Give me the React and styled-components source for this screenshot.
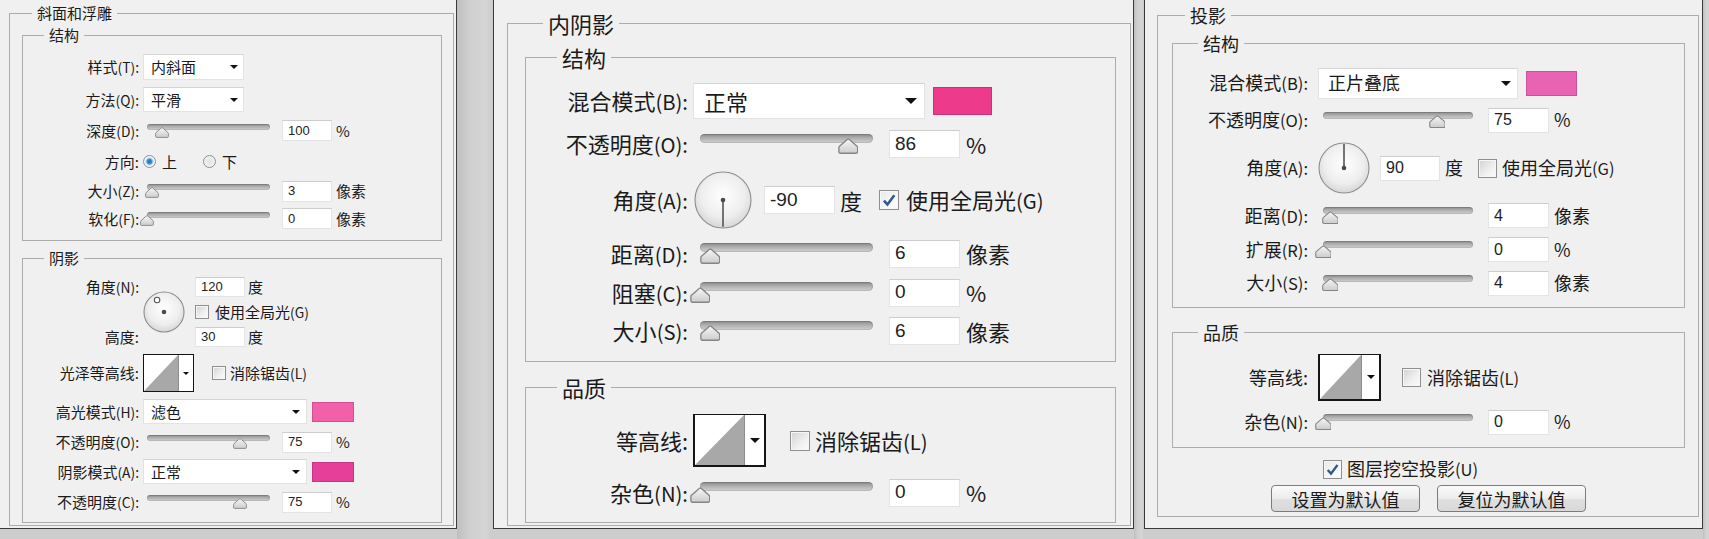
import React from "react";
import styled, { createGlobalStyle } from "styled-components";

const GlobalStyle = createGlobalStyle`
  html, body {
    margin: 0;
    padding: 0;
  }
  body {
    background: #cfcfcf;
    font-family: "Noto Sans CJK SC", "Noto Sans", sans-serif;
    color: #1a1a1a;
  }
`;

// sizes for each of the three cropped dialogs (they were captured at different zooms)
const LEFT = { s: 1, labelW: 116, gap: 4, sliderW: 127, pad: 4, fieldMl: 12, fieldW: 50, fieldH: 21, numFs: 13, unitMl: 4, box: 14 };
const MID = { s: 22 / 15, labelW: 162, gap: 5, sliderW: 180, pad: 7, fieldMl: 16, fieldW: 71, fieldH: 28, numFs: 19, unitMl: 6, box: 20 };
const RIGHT = { s: 1.2, labelW: 135, gap: 10, sliderW: 155, pad: 5, fieldMl: 15, fieldW: 61, fieldH: 25, numFs: 16, unitMl: 5, box: 19 };

function Slider({ c, frac }) {
  const s = c.s;
  const len = c.sliderW - c.pad;
  const tw = 14 * s;
  const left = c.pad + frac * len - tw / 2;
  return (
    <SliderBox $w={c.sliderW} $h={16 * s}>
      <Track $ml={c.pad} $mt={1 * s} $h={6 * s} />
      <Thumb width={tw} height={11 * s} viewBox="0 0 14 11" $top={4 * s} style={{ left }}>
        <defs>
          <linearGradient id="thumbFill" x1="0" y1="0" x2="0" y2="1">
            <stop offset="0" stopColor="#f6f6f6" />
            <stop offset="1" stopColor="#cccccc" />
          </linearGradient>
        </defs>
        <path
          d="M7 0.8 C7.4 0.8 7.8 1 8.1 1.3 L13 5.6 C13.3 5.9 13.4 6.2 13.4 6.6 V9.4 C13.4 10 13 10.4 12.4 10.4 H1.6 C1 10.4 0.6 10 0.6 9.4 V6.6 C0.6 6.2 0.7 5.9 1 5.6 L5.9 1.3 C6.2 1 6.6 0.8 7 0.8 Z"
          fill="url(#thumbFill)"
          stroke="#858585"
          strokeWidth="0.9"
        />
      </Thumb>
    </SliderBox>
  );
}

function SliderRow({ c, h, label, k, frac, value, unit }) {
  return (
    <Row $h={h}>
      <Label $w={c.labelW} $gap={c.gap}>
        {label}
        <Key>({k}):</Key>
      </Label>
      <Slider c={c} frac={frac} />
      <Field $w={c.fieldW} $h={c.fieldH} $ml={c.fieldMl} $fs={c.numFs}>
        {value}
      </Field>
      <Unit $ml={c.unitMl}>{unit}</Unit>
    </Row>
  );
}

function Dial({ size, angle, knob }) {
  const a = (angle * Math.PI) / 180;
  const px = 100 / size;
  return (
    <DialSvg width={size} height={size} viewBox="0 0 100 100">
      <defs>
        <radialGradient id="dialFace" cx="50%" cy="42%" r="60%">
          <stop offset="0" stopColor="#ffffff" />
          <stop offset="0.65" stopColor="#eeeeee" />
          <stop offset="1" stopColor="#d4d4d4" />
        </radialGradient>
      </defs>
      <circle cx="50" cy="50" r={50 - px} fill="url(#dialFace)" stroke="#8e8e8e" strokeWidth={px * 1.1} />
      {knob ? (
        <circle
          cx={50 + 33 * Math.cos(a)}
          cy={50 - 33 * Math.sin(a)}
          r="6.5"
          fill="#fff"
          stroke="#555"
          strokeWidth={px * 1.1}
        />
      ) : (
        <line
          x1="50"
          y1="50"
          x2={50 + 46 * Math.cos(a)}
          y2={50 - 46 * Math.sin(a)}
          stroke="#4a4a4a"
          strokeWidth={px * 1.5}
        />
      )}
      <circle cx="50" cy="50" r={px * 2.3} fill="#4a4a4a" />
    </DialSvg>
  );
}

function Check({ size, ml, on }) {
  return (
    <CheckBox $s={size} $ml={ml} $on={on}>
      {on && (
        <svg width={size - 4} height={size - 4} viewBox="0 0 12 12">
          <path d="M2.2 6.4 L4.8 9.3 L10 2.4" fill="none" stroke="#33578f" strokeWidth="1.9" />
        </svg>
      )}
    </CheckBox>
  );
}

function ContourPicker({ w, h, strip, caret, bw }) {
  return (
    <Contour $w={w} $h={h} $bw={bw}>
      <ContourPlot viewBox="0 0 100 100" preserveAspectRatio="none">
        <polygon points="0,100 100,0 100,100" fill="#a8a8a8" />
      </ContourPlot>
      <ContourDrop $w={strip}>
        <Caret $s={caret} />
      </ContourDrop>
    </Contour>
  );
}

function BevelPanel() {
  const c = LEFT;
  return (
    <Panel $w={457} $fs={15} $noLeft>
      <Group $m="2px 2px 0 9px" $p="0 11px 2px 12px">
        <Legend $ml={10} $lh={22}>斜面和浮雕</Legend>

        <Group $p="4px 0 8px">
          <Legend $ml={21} $lh={22}>结构</Legend>
          <Row $h={34}>
            <Label $w={c.labelW} $gap={c.gap}>样式<Key>(T):</Key></Label>
            <Select $w={101} $h={26} $pl={7} $pr={5}>内斜面<Caret $s={4} /></Select>
          </Row>
          <Row $h={31}>
            <Label $w={c.labelW} $gap={c.gap}>方法<Key>(Q):</Key></Label>
            <Select $w={101} $h={25} $pl={7} $pr={5}>平滑<Caret $s={4} /></Select>
          </Row>
          <SliderRow c={c} h={31} label="深度" k="D" frac={0.12} value="100" unit="%" />
          <Row $h={31}>
            <Label $w={c.labelW} $gap={c.gap}>方向:</Label>
            <Radio $on />
            <Unit $ml={6}>上</Unit>
            <Radio $ml={26} />
            <Unit $ml={6}>下</Unit>
          </Row>
          <SliderRow c={c} h={28} label="大小" k="Z" frac={0.04} value="3" unit="像素" />
          <SliderRow c={c} h={27} label="软化" k="F" frac={0} value="0" unit="像素" />
        </Group>

        <Group $m="6px 0 0" $p="7px 0 2px">
          <Legend $ml={21} $lh={22}>阴影</Legend>
          <AngleGrid $labelW={c.labelW + c.gap} $dialW={52} $rows="22px 28px 22px">
            <GridLabel $gap={c.gap} $row={1}>角度<Key>(N):</Key></GridLabel>
            <DialCell>
              <Dial size={42} angle={120} knob />
            </DialCell>
            <Cell $row={1}>
              <Field $w={50} $h={20} $fs={13}>120</Field>
              <Unit $ml={3}>度</Unit>
            </Cell>
            <Cell $row={2}>
              <Check size={14} />
              <Unit $ml={6}>使用全局光<Key>(G)</Key></Unit>
            </Cell>
            <GridLabel $gap={c.gap} $row={3}>高度:</GridLabel>
            <Cell $row={3}>
              <Field $w={50} $h={20} $fs={13}>30</Field>
              <Unit $ml={3}>度</Unit>
            </Cell>
          </AngleGrid>
          <Row $h={50}>
            <Label $w={c.labelW} $gap={c.gap}>光泽等高线:</Label>
            <ContourPicker w={51} h={38} strip={14} caret={3} bw={1} />
            <Check size={14} ml={18} />
            <Unit $ml={4}>消除锯齿<Key>(L)</Key></Unit>
          </Row>
          <Row $h={27}>
            <Label $w={c.labelW} $gap={c.gap}>高光模式<Key>(H):</Key></Label>
            <Select $w={164} $h={25} $pl={7} $pr={6}>滤色<Caret $s={4} /></Select>
            <Swatch $w={42} $h={20} $ml={5} $c="#f160a8" />
          </Row>
          <SliderRow c={c} h={34} label="不透明度" k="O" frac={0.756} value="75" unit="%" />
          <Row $h={25}>
            <Label $w={c.labelW} $gap={c.gap}>阴影模式<Key>(A):</Key></Label>
            <Select $w={164} $h={25} $pl={7} $pr={6}>正常<Caret $s={4} /></Select>
            <Swatch $w={42} $h={20} $ml={5} $c="#e63f9a" />
          </Row>
          <SliderRow c={c} h={36} label="不透明度" k="C" frac={0.756} value="75" unit="%" />
        </Group>
      </Group>
    </Panel>
  );
}

function InnerShadowPanel() {
  const c = MID;
  return (
    <Panel $w={641} $fs={22}>
      <Group $m="8px 2px 0 13px" $p="0 14px 2px 17px">
        <Legend $ml={18} $lh={30}>内阴影</Legend>

        <Group $m="4px 0 0" $p="8px 0 11px">
          <Legend $ml={31} $lh={30}>结构</Legend>
          <Row $h={42}>
            <Label $w={c.labelW} $gap={c.gap}>混合模式<Key>(B):</Key></Label>
            <Select $w={232} $h={36} $pl={10} $pr={7}>正常<Caret $s={6} /></Select>
            <Swatch $w={59} $h={28} $ml={8} $c="#ee3a8b" />
          </Row>
          <SliderRow c={c} h={44} label="不透明度" k="O" frac={0.855} value="86" unit="%" />
          <Row $h={68}>
            <Label $w={c.labelW} $gap={c.gap}>角度<Key>(A):</Key></Label>
            <DialWrap $ml={1}>
              <Dial size={58} angle={-90} />
            </DialWrap>
            <Field $w={71} $h={28} $ml={12} $fs={19}>-90</Field>
            <Unit $ml={5}>度</Unit>
            <Check size={c.box} ml={17} on />
            <Unit $ml={7}>使用全局光<Key>(G)</Key></Unit>
          </Row>
          <SliderRow c={c} h={39} label="距离" k="D" frac={0.058} value="6" unit="像素" />
          <SliderRow c={c} h={39} label="阻塞" k="C" frac={0} value="0" unit="%" />
          <SliderRow c={c} h={38} label="大小" k="S" frac={0.058} value="6" unit="像素" />
        </Group>

        <Group $m="10px 0 0" $p="8px 0 8px">
          <Legend $ml={31} $lh={30}>品质</Legend>
          <Row $h={61}>
            <Label $w={c.labelW} $gap={c.gap}>等高线:</Label>
            <ContourPicker w={73} h={53} strip={19} caret={5} bw={2} />
            <Check size={c.box} ml={24} />
            <Unit $ml={5}>消除锯齿<Key>(L)</Key></Unit>
          </Row>
          <SliderRow c={c} h={43} label="杂色" k="N" frac={0} value="0" unit="%" />
        </Group>
      </Group>
    </Panel>
  );
}

function DropShadowPanel() {
  const c = RIGHT;
  return (
    <Panel $w={559} $fs={18}>
      <Group $m="2px 3px 0 12px" $p="0 13px 4px 14px">
        <Legend $ml={13} $lh={26}>投影</Legend>

        <Group $m="2px 0 0" $p="8px 0 7px">
          <Legend $ml={25} $lh={26}>结构</Legend>
          <Row $h={38}>
            <Label $w={c.labelW} $gap={c.gap}>混合模式<Key>(B):</Key></Label>
            <Select $w={200} $h={31} $pl={9} $pr={6}>正片叠底<Caret $s={5} /></Select>
            <Swatch $w={51} $h={25} $ml={8} $c="#e864b3" />
          </Row>
          <SliderRow c={c} h={36} label="不透明度" k="O" frac={0.76} value="75" unit="%" />
          <Row $h={60}>
            <Label $w={c.labelW} $gap={c.gap}>角度<Key>(A):</Key></Label>
            <Dial size={52} angle={90} />
            <Field $w={60} $h={25} $ml={10} $fs={16}>90</Field>
            <Unit $ml={5}>度</Unit>
            <Check size={c.box} ml={15} />
            <Unit $ml={5}>使用全局光<Key>(G)</Key></Unit>
          </Row>
          <SliderRow c={c} h={35} label="距离" k="D" frac={0.047} value="4" unit="像素" />
          <SliderRow c={c} h={33} label="扩展" k="R" frac={0} value="0" unit="%" />
          <SliderRow c={c} h={34} label="大小" k="S" frac={0.047} value="4" unit="像素" />
        </Group>

        <Group $m="11px 0 0" $p="5px 0 8px">
          <Legend $ml={25} $lh={26}>品质</Legend>
          <Row $h={55}>
            <Label $w={c.labelW} $gap={c.gap}>等高线:</Label>
            <ContourPicker w={63} h={47} strip={17} caret={4} bw={2} />
            <Check size={c.box} ml={21} />
            <Unit $ml={6}>消除锯齿<Key>(L)</Key></Unit>
          </Row>
          <SliderRow c={c} h={34} label="杂色" k="N" frac={0} value="0" unit="%" />
        </Group>

        <KnockoutRow>
          <Check size={c.box} on />
          <Unit $ml={5}>图层挖空投影<Key>(U)</Key></Unit>
        </KnockoutRow>
        <ButtonRow>
          <Button>设置为默认值</Button>
          <Button>复位为默认值</Button>
        </ButtonRow>
      </Group>
    </Panel>
  );
}

function App() {
  return (
    <>
      <GlobalStyle />
      <Page>
        <BevelPanel />
        <Gutter $w={36} />
        <InnerShadowPanel />
        <Gutter $w={10} />
        <DropShadowPanel />
        <Gutter $w={6} />
      </Page>
    </>
  );
}

const Page = styled.div`
  display: flex;
  align-items: flex-start;
  width: 1709px;
  height: 539px;
  overflow: hidden;
  background: #cdcdcd;
`;

const Gutter = styled.div`
  flex-shrink: 0;
  width: ${(p) => p.$w}px;
  height: 539px;
  background: linear-gradient(90deg, #bfbfbf, #cfcfcf 35%, #d5d5d5 80%, #cbcbcb);
`;

const Panel = styled.section`
  box-sizing: border-box;
  flex-shrink: 0;
  width: ${(p) => p.$w}px;
  height: 529px;
  overflow: hidden;
  background: #f0f0f0;
  border-bottom: 1px solid #3a3a3a;
  border-left: ${(p) => (p.$noLeft ? "none" : "1px solid #3a3a3a")};
  border-right: 1px solid #3a3a3a;
  font-size: ${(p) => p.$fs}px;
  line-height: 1.2;
`;

const Group = styled.fieldset`
  margin: ${(p) => p.$m || "0"};
  padding: ${(p) => p.$p || "0"};
  border: 1px solid #acacac;
  min-inline-size: 0;
`;

const Legend = styled.legend`
  margin-left: ${(p) => p.$ml}px;
  padding: 0 5px;
  line-height: ${(p) => p.$lh}px;
  color: #1a1a1a;
`;

const Row = styled.div`
  display: flex;
  align-items: center;
  height: ${(p) => p.$h}px;
  white-space: nowrap;
`;

const Label = styled.span`
  flex-shrink: 0;
  width: ${(p) => p.$w}px;
  margin-right: ${(p) => p.$gap}px;
  text-align: right;
  white-space: nowrap;
`;

const Key = styled.span`
  font-size: 0.92em;
`;

const Unit = styled.span`
  flex-shrink: 0;
  margin-left: ${(p) => p.$ml || 0}px;
  white-space: nowrap;
`;

const Select = styled.div`
  box-sizing: border-box;
  flex-shrink: 0;
  display: flex;
  align-items: center;
  justify-content: space-between;
  width: ${(p) => p.$w}px;
  height: ${(p) => p.$h}px;
  padding: 0 ${(p) => p.$pr}px 0 ${(p) => p.$pl}px;
  background: #fff;
  border: 1px solid #e3e3e3;
  border-top-color: #d4d4d4;
`;

const Caret = styled.span`
  width: 0;
  height: 0;
  border-left: ${(p) => p.$s}px solid transparent;
  border-right: ${(p) => p.$s}px solid transparent;
  border-top: ${(p) => p.$s}px solid #111;
`;

const Swatch = styled.div`
  box-sizing: border-box;
  flex-shrink: 0;
  width: ${(p) => p.$w}px;
  height: ${(p) => p.$h}px;
  margin-left: ${(p) => p.$ml}px;
  background: ${(p) => p.$c};
  border: 1px solid rgba(0, 0, 0, 0.14);
`;

const Field = styled.div`
  box-sizing: border-box;
  flex-shrink: 0;
  display: flex;
  align-items: center;
  width: ${(p) => p.$w}px;
  height: ${(p) => p.$h}px;
  margin-left: ${(p) => p.$ml || 0}px;
  padding-left: 5px;
  background: #fff;
  border: 1px solid #e4e4e4;
  border-top-color: #cdcdcd;
  font-family: "Liberation Sans", Arial, sans-serif;
  font-size: ${(p) => p.$fs}px;
  color: #222;
`;

const SliderBox = styled.div`
  position: relative;
  flex-shrink: 0;
  width: ${(p) => p.$w}px;
  height: ${(p) => p.$h}px;
`;

const Track = styled.div`
  margin-left: ${(p) => p.$ml}px;
  margin-top: ${(p) => p.$mt}px;
  height: ${(p) => p.$h}px;
  border-radius: ${(p) => p.$h / 2}px;
  background: linear-gradient(#858585, #acacac 40%, #d2d2d2);
  box-shadow: inset 0 0 0 1px rgba(0, 0, 0, 0.1);
`;

const Thumb = styled.svg`
  position: absolute;
  top: ${(p) => p.$top}px;
  display: block;
`;

const DialSvg = styled.svg`
  display: block;
  flex-shrink: 0;
`;

const DialWrap = styled.div`
  flex-shrink: 0;
  margin-left: ${(p) => p.$ml}px;
`;

const CheckBox = styled.span`
  box-sizing: border-box;
  flex-shrink: 0;
  display: inline-flex;
  align-items: center;
  justify-content: center;
  width: ${(p) => p.$s}px;
  height: ${(p) => p.$s}px;
  margin-left: ${(p) => p.$ml || 0}px;
  border: 1px solid #8f8f8f;
  background: ${(p) =>
    p.$on
      ? "linear-gradient(135deg, #e9e9e9, #ffffff)"
      : "linear-gradient(135deg, #d2d2d2, #f0f0f0 60%, #fbfbfb)"};
  box-shadow: inset 0 0 0 1px #f7f7f7;
`;

const Radio = styled.span`
  box-sizing: border-box;
  flex-shrink: 0;
  width: 13px;
  height: 13px;
  margin-left: ${(p) => p.$ml || 0}px;
  border-radius: 50%;
  border: 1px solid #8f8f8f;
  background: ${(p) =>
    p.$on
      ? "radial-gradient(circle, #1f6fae 0, #3a97d8 2.5px, #bfe0f4 3.6px, #f4f4f4 4.6px)"
      : "radial-gradient(circle, #e2e2e2, #f8f8f8)"};
`;

const AngleGrid = styled.div`
  display: grid;
  grid-template-columns: ${(p) => p.$labelW}px ${(p) => p.$dialW}px 1fr;
  grid-template-rows: ${(p) => p.$rows};
  align-items: center;
`;

const GridLabel = styled.span`
  grid-column: 1;
  grid-row: ${(p) => p.$row};
  padding-right: ${(p) => p.$gap}px;
  text-align: right;
  white-space: nowrap;
`;

const DialCell = styled.div`
  grid-column: 2;
  grid-row: 1 / 4;
`;

const Cell = styled.div`
  grid-column: 3;
  grid-row: ${(p) => p.$row};
  display: flex;
  align-items: center;
  white-space: nowrap;
`;

const Contour = styled.div`
  box-sizing: border-box;
  flex-shrink: 0;
  display: flex;
  width: ${(p) => p.$w}px;
  height: ${(p) => p.$h}px;
  background: #fff;
  border: ${(p) => p.$bw}px solid #151515;
  border-top-width: 1px;
`;

const ContourPlot = styled.svg`
  display: block;
  flex: 1;
  height: 100%;
`;

const ContourDrop = styled.div`
  display: flex;
  align-items: center;
  justify-content: center;
  width: ${(p) => p.$w}px;
  border-left: 1px solid #8c8c8c;
`;

const KnockoutRow = styled.div`
  display: flex;
  align-items: center;
  height: 24px;
  margin-top: 9px;
  padding-left: 151px;
  white-space: nowrap;
`;

const ButtonRow = styled.div`
  display: flex;
  justify-content: center;
  gap: 17px;
  margin-top: 4px;
`;

const Button = styled.button`
  box-sizing: border-box;
  width: 149px;
  height: 27px;
  padding: 0;
  border: 1px solid #7c7c7c;
  border-radius: 4px;
  background: linear-gradient(#fbfbfb, #ececec 50%, #e0e0e0 52%, #d8d8d8);
  font-family: inherit;
  font-size: 18px;
  line-height: 1;
  color: #1a1a1a;
`;

export default App;
